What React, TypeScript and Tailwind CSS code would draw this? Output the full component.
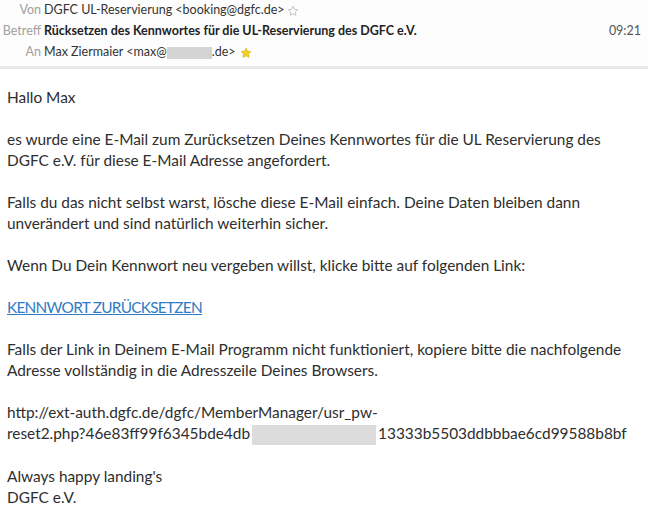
import React from "react";

function Star({ filled }: { filled?: boolean }) {
  return (
    <svg width="12" height="12" viewBox="0 0 24 24" className={filled ? "ml-[4px] inline-block" : "ml-[2px] inline-block"}>
      <path
        d="M12 2.5l2.9 6.1 6.6.8-4.9 4.6 1.3 6.6L12 17.3l-5.9 3.3 1.3-6.6-4.9-4.6 6.6-.8z"
        fill={filled ? "#f4cf2a" : "none"}
        stroke={filled ? "#e0b400" : "#b8b8b8"}
        strokeWidth="1.6"
        strokeLinejoin="round"
      />
    </svg>
  );
}

function HeaderRow({ label, children, right }: { label: string; children: React.ReactNode; right?: string }) {
  return (
    <div className="flex h-[21px] items-center">
      <div className="w-[41px] shrink-0 text-right text-[#a0a0a0]">{label}</div>
      <div className="flex flex-1 items-center pl-[3px] text-[#333]">{children}</div>
      {right && <div className="pr-[7px] text-[#555]">{right}</div>}
    </div>
  );
}

export default function App() {
  return (
    <div className="min-h-[517px] w-[648px] bg-white" style={{ fontFamily: "Lato, 'Open Sans', sans-serif" }}>
      <div className="border-b-[3px] border-[#e8e8e8] bg-[#fdfdfd] pb-[3px] text-[12.5px] leading-none">
        <HeaderRow label="Von">
          DGFC UL-Reservierung &lt;booking@dgfc.de&gt;
          <Star />
        </HeaderRow>
        <HeaderRow label="Betreff" right="09:21">
          <span className="font-bold text-[#222]">Rücksetzen des Kennwortes für die UL-Reservierung des DGFC e.V.</span>
        </HeaderRow>
        <HeaderRow label="An">
          Max Ziermaier &lt;max@
          <span className="inline-block h-[12px] w-[45px] bg-[#d4d4d4]" />
          .de&gt;
          <Star filled />
        </HeaderRow>
      </div>

      <div className="space-y-[21px] pl-[7px] pt-[18px] text-[15.4px] leading-[21px] text-[#2e2e2e]">
        <p>Hallo Max</p>
        <p>
          es wurde eine E-Mail zum Zurücksetzen Deines Kennwortes für die UL Reservierung des
          <br />
          DGFC e.V. für diese E-Mail Adresse angefordert.
        </p>
        <p>
          Falls du das nicht selbst warst, lösche diese E-Mail einfach. Deine Daten bleiben dann
          <br />
          unverändert und sind natürlich weiterhin sicher.
        </p>
        <p>Wenn Du Dein Kennwort neu vergeben willst, klicke bitte auf folgenden Link:</p>
        <p>
          <a className="tracking-[-0.75px] text-[#2f7cc4] underline">KENNWORT ZURÜCKSETZEN</a>
        </p>
        <p>
          Falls der Link in Deinem E-Mail Programm nicht funktioniert, kopiere bitte die nachfolgende
          <br />
          Adresse vollständig in die Adresszeile Deines Browsers.
        </p>
        <p>
          http://ext-auth.dgfc.de/dgfc/MemberManager/usr_pw-
          <br />
          reset2.php?46e83ff99f6345bde4db
          <span className="mx-[2px] inline-block h-[20px] w-[124px] bg-[#dcdcdc] align-middle" />
          13333b5503ddbbbae6cd99588b8bf
        </p>
        <p>
          Always happy landing's
          <br />
          DGFC e.V.
        </p>
      </div>
    </div>
  );
}
